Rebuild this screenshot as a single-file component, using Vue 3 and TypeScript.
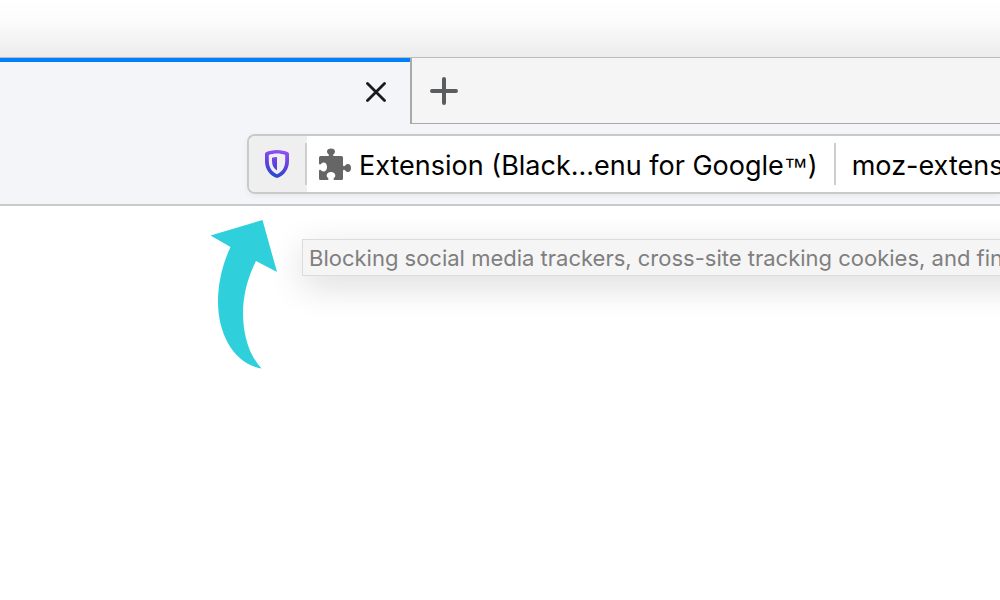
<script setup lang="ts">
import { ref } from 'vue'

const address = ref('moz-extension')
const extensionName = 'Extension (Black...enu for Google'
const trackingNote = 'Blocking social media trackers, cross-site tracking cookies, and fingerprinters'
</script>

<template>
  <div class="window">
    <div class="titlebar"></div>
    <div class="tabstrip">
      <div class="tab">
        <button class="icon-button" type="button" aria-label="Close tab">
          <svg width="20" height="20" viewBox="0 0 20 20" aria-hidden="true">
            <path d="M1.5 1.5 18.5 18.5M18.5 1.5 1.5 18.5" fill="none" stroke="#18191b" stroke-width="2.8" stroke-linecap="round" />
          </svg>
        </button>
      </div>
      <div class="tab-rest">
        <button class="icon-button" type="button" aria-label="New tab">
          <svg width="28" height="28" viewBox="0 0 28 28" aria-hidden="true">
            <path d="M14 2V26M2 14H26" fill="none" stroke="#5b5c5d" stroke-width="4" stroke-linecap="round" />
          </svg>
        </button>
      </div>
    </div>

    <div class="toolbar">
      <div class="field">
        <button class="shield" type="button" aria-label="Tracking protection" aria-describedby="tracking-note">
          <svg width="26" height="30" viewBox="0 0 26 30" aria-hidden="true">
            <defs>
              <linearGradient id="shield-fill" gradientUnits="userSpaceOnUse" x1="16" y1="1" x2="10" y2="29">
                <stop offset="0" stop-color="#9150fa" />
                <stop offset="0.5" stop-color="#633fe0" />
                <stop offset="1" stop-color="#1f4bcf" />
              </linearGradient>
            </defs>
            <path fill="url(#shield-fill)" fill-rule="evenodd" d="M13 1C17 1 21 2 24 3.2Q25 3.700 25 5V12C25 20 20.500 26.500 13 29C5.500 26.500 1 20 1 12V5Q1 3.700 2 3.200C5 2 9 1 13 1ZM13 4.600C9.800 4.600 7 5.200 4.800 6V12C4.800 18.500 8 23 13 25.200C18 23 21.200 18.500 21.200 12V6C19 5.200 16.200 4.600 13 4.600Z" />
            <path fill="url(#shield-fill)" d="M13 8V21.600C9.800 19.600 8 16.400 8 12V8.800C9.500 8.300 11.200 8 13 8Z" />
          </svg>
        </button>
        <button class="identity" type="button">
          <svg class="puzzle" width="34" height="34" viewBox="0 0 34 34" aria-hidden="true">
            <path fill="#666" d="M1 9.500Q1 8 2.500 8H10Q11 8 11 7.200Q11 6.500 10 5.800Q9 5 9 3.600C9 1.500 10.700.500 13 .500S17 1.500 17 3.600Q17 5 16 5.800Q15 6.500 15 7.200Q15 8 16 8H23.500Q25 8 25 9.500V17Q25 18.200 26 18.200Q26.700 18.200 27.400 17.300Q28.400 16 30 16C32 16 33 17.700 33 20S32 24 30 24Q28.400 24 27.400 22.700Q26.700 21.800 26 21.800Q25 21.800 25 23V30.500Q25 32 23.500 32H16.500Q15.500 32 15.500 31Q15.500 30.300 16.400 29.600Q17.300 28.800 17.300 27.500C17.300 25.200 15.500 24 13 24S8.700 25.200 8.700 27.500Q8.700 28.800 9.600 29.600Q10.500 30.300 10.500 31Q10.500 32 9.500 32H2.500Q1 32 1 30.500V23Q1 21.800 2 21.800Q2.600 21.800 3.300 22.500Q4.200 23.500 5.500 23.500C7.800 23.500 9 21.500 9 19S7.800 14.500 5.500 14.500Q4.200 14.500 3.300 15.700Q2.600 16.500 2 16.500Q1 16.500 1 15.300Z" />
          </svg>
          <span class="name">{{ extensionName }}<span class="mark">™</span>)</span>
        </button>
        <input v-model="address" class="address" type="text" aria-label="Address" />
      </div>
    </div>

    <main class="page">
      <svg class="arrow" width="68" height="150" viewBox="0 0 68 150" aria-hidden="true">
        <path fill="#2fd0dc" d="M.500 15.500 52.500 0 67 52 46 41C35 63 31 85 34 108C36.500 125 42 138 51.500 148.500C24 144 8 114 8 82C8 62 13 43 20.500 27Z" />
      </svg>
      <div id="tracking-note" class="tooltip" role="tooltip">{{ trackingNote }}</div>
    </main>
  </div>
</template>

<style>
body {
  margin: 0;
  background: #fff;
}
</style>

<style scoped>
.window {
  min-height: 100vh;
  overflow: hidden;
  font-family: Inter, "Liberation Sans", sans-serif;
}

button {
  border: 0;
  padding: 0;
  background: transparent;
  font: inherit;
  color: inherit;
}

svg {
  display: block;
  flex: none;
}

.titlebar {
  height: 57px;
  background: linear-gradient(#fff, #fbfbfb 40%, #ececec);
  border-bottom: 1px solid #bdbdbd;
}

.tabstrip {
  display: flex;
  height: 66px;
}

.tab {
  box-sizing: border-box;
  width: 41%;
  display: flex;
  align-items: center;
  justify-content: flex-end;
  padding: 0 20px 2px 0;
  background: #f4f5f8;
  border-top: 4px solid #0080ff;
}

.tab-rest {
  box-sizing: border-box;
  flex: 1;
  display: flex;
  align-items: center;
  padding-left: 16px;
  background: #f5f5f5;
  border-left: 2px solid #aaa;
  border-bottom: 1px solid #aaa;
}

.icon-button {
  display: flex;
  align-items: center;
  justify-content: center;
  padding: 0 2px;
}

.tab .icon-button {
  padding: 0 4px;
}

.toolbar {
  display: flex;
  padding: 10px 0 10px 247px;
  background: #f4f5f8;
  border-bottom: 2px solid #c9cacc;
}

.field {
  box-sizing: border-box;
  flex: 1;
  min-width: 0;
  height: 60px;
  display: flex;
  align-items: center;
  overflow: hidden;
  background: #fff;
  border: 2px solid #c9c9ca;
  border-right: 0;
  border-radius: 8px 0 0 8px;
  box-shadow: 0 2px 6px rgba(0, 0, 0, 0.05);
  font-size: 27px;
  line-height: 32px;
  color: #000;
}

.shield {
  flex: none;
  align-self: stretch;
  display: flex;
  align-items: center;
  padding-left: 15px;
  gap: 15px;
  background: #efefef;
}

.shield::after,
.identity::after {
  content: "";
  width: 2px;
  height: 42px;
  background: #cecece;
}

.identity {
  flex: none;
  display: flex;
  align-items: center;
  padding-left: 11px;
  white-space: nowrap;
}

.puzzle {
  margin-top: 2px;
}

.name {
  margin: 0 16px 0 7px;
  padding-top: 4px;
}

.mark {
  font-family: "Liberation Sans", sans-serif;
  font-size: 24px;
}

.address {
  flex: 1;
  min-width: 0;
  border: 0;
  outline: 0;
  padding: 4px 0 0 16px;
  background: transparent;
  font: inherit;
  color: inherit;
}

.page {
  position: relative;
  min-height: 394px;
  background: #fff;
}

.arrow {
  position: absolute;
  left: 210px;
  top: 14px;
}

.tooltip {
  position: absolute;
  left: 302px;
  top: 33px;
  padding: 5px 6px 3px;
  background: #f5f5f5;
  border: 1px solid #dcdcdc;
  box-shadow: 0 10px 36px rgba(0, 0, 0, 0.14);
  font-size: 22px;
  line-height: 27px;
  color: #7f7f7f;
  white-space: nowrap;
}
</style>
